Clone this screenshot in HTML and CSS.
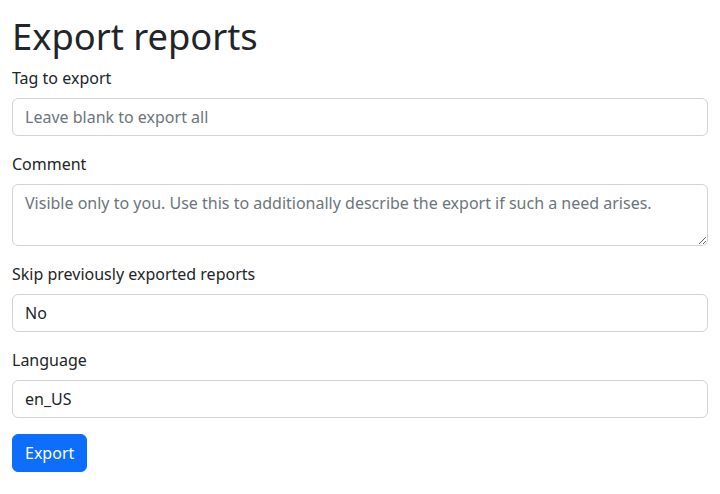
FILE: index.html
```html
<!DOCTYPE html>
<html lang="en">
<head>
<meta charset="utf-8">
<title>Export reports</title>
<link rel="stylesheet" href="styles.css">
</head>
<body>
<div class="container">
  <h1 class="title">Export reports</h1>
  <form class="form">
    <div class="group">
      <label class="label" for="tag">Tag to export</label>
      <input class="control" id="tag" type="text" placeholder="Leave blank to export all">
    </div>
    <div class="group">
      <label class="label" for="comment">Comment</label>
      <textarea class="control area" id="comment" rows="2" placeholder="Visible only to you. Use this to additionally describe the export if such a need arises."></textarea>
    </div>
    <div class="group">
      <label class="label" for="skip">Skip previously exported reports</label>
      <select class="control select" id="skip"><option>No</option><option>Yes</option></select>
    </div>
    <div class="group">
      <label class="label" for="lang">Language</label>
      <select class="control select" id="lang"><option>en_US</option></select>
    </div>
    <button class="btn" type="button">Export</button>
  </form>
</div>
</body>
</html>
```

FILE: styles.css
```css
* { box-sizing: border-box; }
html, body { margin: 0; padding: 0; background: #fff; }
body {
  font-family: "Noto Sans", "Liberation Sans", sans-serif;
  font-size: 16px;
  line-height: 1.5;
  color: #212529;
}
.container { padding: 0 12px; }
.title {
  margin: 0 0 8px;
  padding-top: 14.6px;
  font-size: 36.3px;
  font-weight: 400;
  line-height: 1.2;
}
.form { margin: 0; }
.group { margin-bottom: 16px; }
.label { display: inline-block; margin-bottom: 8px; }
.control {
  display: block;
  width: 100%;
  height: 38px;
  padding: 6px 12px;
  font-family: inherit;
  font-size: 16px;
  line-height: 1.5;
  color: #212529;
  background: #fff;
  border: 1px solid #ced4da;
  border-radius: 6px;
  margin: 0;
}
.control::placeholder { color: #6c757d; opacity: 1; }
.area { height: 62px; resize: vertical; }
.select { appearance: none; -webkit-appearance: none; }
.btn {
  display: inline-block;
  height: 38px;
  padding: 6px 12px;
  font-family: inherit;
  font-size: 16px;
  line-height: 1.5;
  color: #fff;
  background: #0d6efd;
  border: 1px solid #0d6efd;
  border-radius: 6px;
}
```
